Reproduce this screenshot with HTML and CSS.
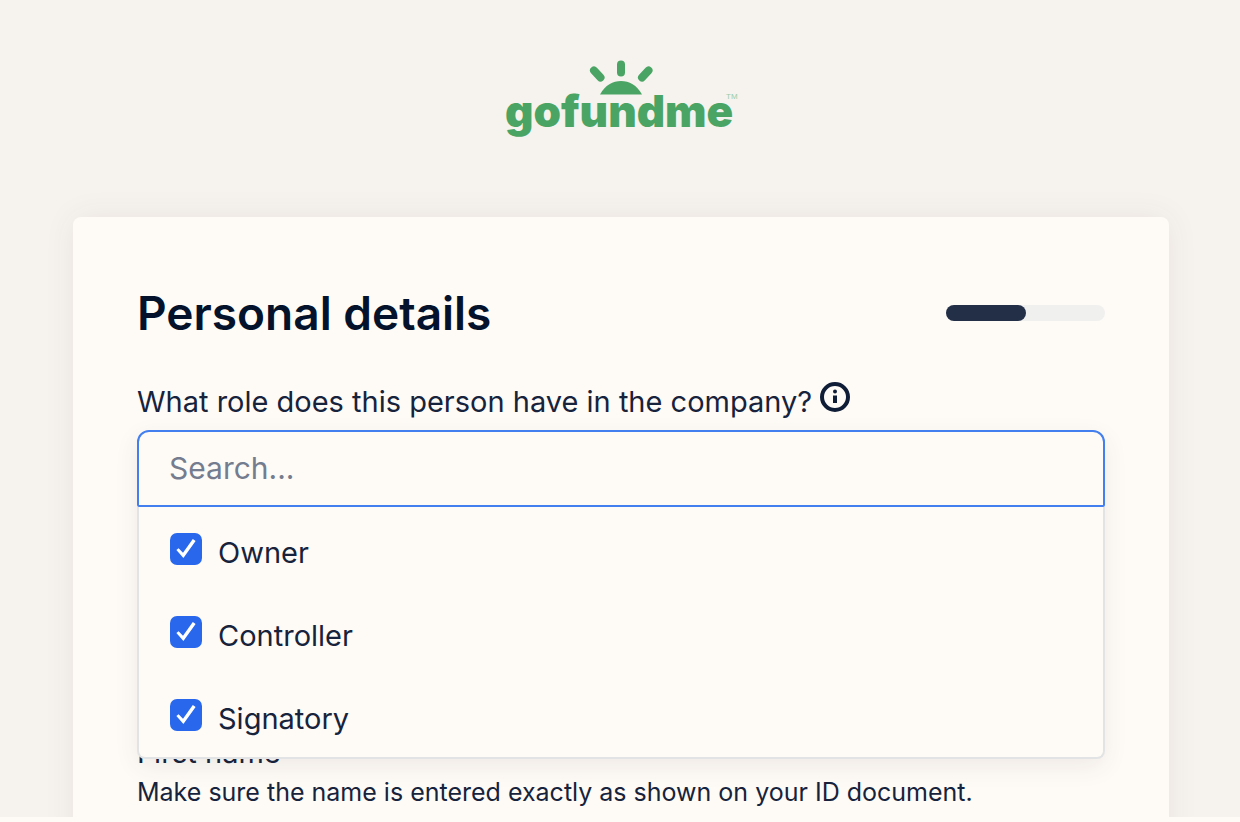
FILE: index.html
```html
<!DOCTYPE html>
<html lang="en">
<head>
<meta charset="utf-8">
<meta name="viewport" content="width=device-width, initial-scale=1">
<title>Personal details</title>
<link rel="stylesheet" href="styles.css">
</head>
<body>
<div class="page">
  <header class="brand">
    <svg class="logo" viewBox="0 0 240 84" role="img" aria-label="gofundme">
      <g class="logo-rays">
        <path d="M120 8.500V16.500M93 14.500L99.500 21.500M147.500 14.500L141 21.500"/>
      </g>
      <path class="logo-sun" d="M99 38.500C104 29 112 25 120 25S136 29 141 38.500Z"/>
      <text class="logo-word" x="4" y="71">gofundme</text>
      <text class="logo-tm" x="225" y="43">TM</text>
    </svg>
  </header>
  <main class="card">
    <div class="card-head">
      <h1 class="title">Personal details</h1>
      <div class="progress" role="progressbar" aria-label="Progress" aria-valuenow="50" aria-valuemin="0" aria-valuemax="100"><div class="progress-fill" style="width:50%"></div></div>
    </div>
    <div class="label-row">
      <label class="label" for="role">What role does this person have in the company?</label>
      <button class="info" type="button" aria-label="More information">
        <svg viewBox="0 0 30 30"><circle class="info-ring" cx="15" cy="15" r="13"/><circle cx="15" cy="9.500" r="2"/><path d="M13 13.500h4v7.500h-4z"/></svg>
      </button>
    </div>
    <div class="combo">
      <input class="search" id="role" type="text" placeholder="Search...">
      <div class="options">
        <label class="option"><input class="check" type="checkbox" checked><span>Owner</span></label>
        <label class="option"><input class="check" type="checkbox" checked><span>Controller</span></label>
        <label class="option"><input class="check" type="checkbox" checked><span>Signatory</span></label>
      </div>
    </div>
    <div class="name-field">
      <div class="name-label">First name</div>
      <p class="hint">Make sure the name is entered exactly as shown on your ID document.</p>
    </div>
  </main>
</div>
</body>
</html>
```
FILE: styles.css
```css
* { box-sizing: border-box; }
body {
  margin: 0;
  background: #fefbf6;
  color: #17233c;
  font-family: Inter, "Liberation Sans", sans-serif;
  font-size: 29px;
}
.page {
  height: calc(100vh - 5px);
  overflow: hidden;
  background: #f6f3ee;
  padding: 56px 71px 0 73px;
}
.brand { display: flex; justify-content: center; height: 161px; }
.logo { width: 240px; height: 84px; overflow: visible; }
.logo-rays { fill: none; stroke: #4aa564; stroke-width: 8px; stroke-linecap: round; }
.logo-sun { fill: #4aa564; }
.logo-word { fill: #4aa564; font: 900 44px Inter, sans-serif; }
.logo-tm { fill: #9bcba9; font: 400 8px "Liberation Sans", sans-serif; }
.card {
  min-height: 100%;
  padding: 72px 64px 0;
  background: #fefbf6;
  border-radius: 8px;
  box-shadow: 0 0 32px rgba(70, 30, 50, 0.07);
}
.card-head { display: flex; align-items: center; justify-content: space-between; }
.title { margin: 0; color: #04122b; font-size: 46px; font-weight: 600; line-height: 48px; }
.progress { width: 159px; height: 16px; border-radius: 8px; background: #f0f0ef; }
.progress-fill { height: 100%; border-radius: 8px; background: #232e47; }
.label-row { display: flex; align-items: flex-start; gap: 8px; margin-top: 44px; height: 49px; }
.label { line-height: 42px; }
.info { width: 30px; height: 30px; margin-top: 1px; padding: 0; border: 0; background: none; color: #101d36; }
.info svg { display: block; width: 30px; height: 30px; fill: currentColor; }
.info .info-ring { fill: none; stroke: currentColor; stroke-width: 4px; }
.combo { position: relative; border-radius: 10px; background: #fefbf6; box-shadow: 0 8px 24px rgba(70, 30, 50, 0.08); }
.search {
  display: block;
  width: 100%;
  height: 77px;
  padding: 0 30px 2px;
  border: 2px solid #437fef;
  border-radius: 12px 12px 2px 2px;
  background: #fefbf6;
  color: inherit;
  font: inherit;
  font-size: 30px;
  outline: 0;
}
.search::placeholder { color: #747d8f; opacity: 1; }
.options { padding: 0 31px 1px; border: 2px solid #e2e3e4; border-top: 0; border-radius: 0 0 8px 8px; }
.option { display: flex; align-items: center; gap: 16px; height: 83px; padding-top: 8px; }
.check {
  appearance: none;
  width: 32px;
  height: 32px;
  margin: 0 0 8px;
  border-radius: 7px;
  background: #2968ed;
  display: grid;
  place-items: center;
}
.check:checked::before {
  content: "";
  width: 20px;
  height: 20px;
  background: #fff;
  clip-path: polygon(2% 58%, 13% 49%, 35% 71%, 84% 2%, 98% 12%, 37% 97%);
}
.name-field { margin-top: -22px; }
.name-label { line-height: 32px; }
.hint { margin: 7px 0 0; font-size: 25px; line-height: 32px; }
```
